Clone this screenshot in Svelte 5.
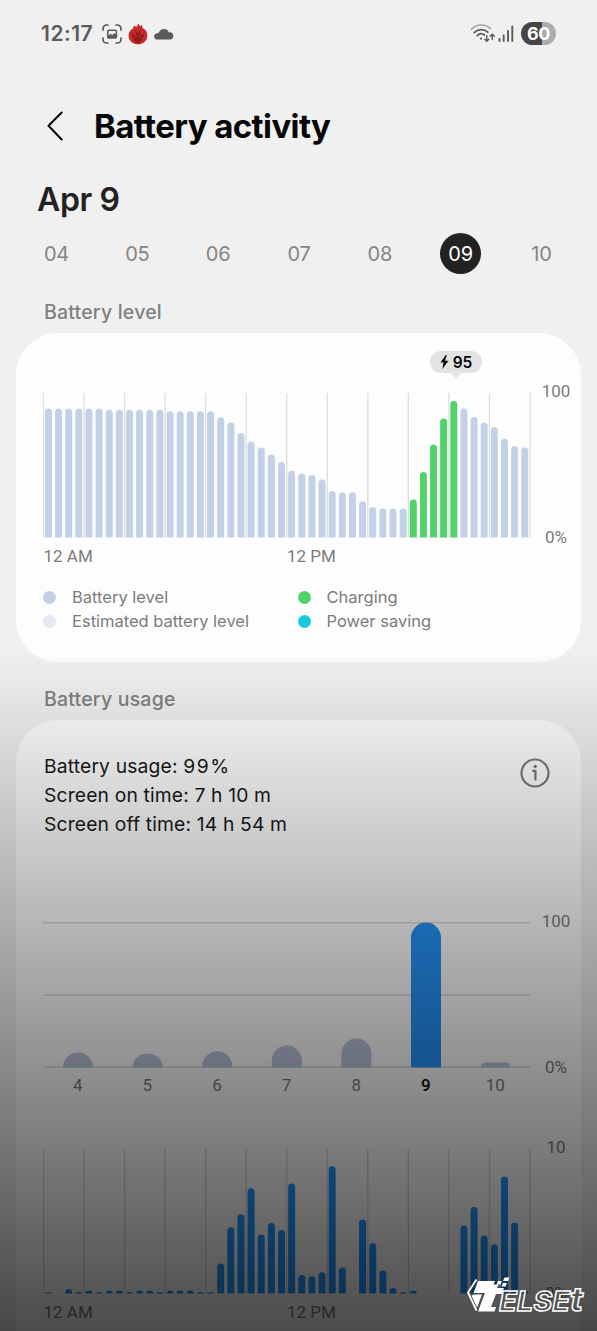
<script>
  const days = ['04', '05', '06', '07', '08', '09', '10'];
  const selected = '09';

  const STEP = 10.135;
  const BASE = 144.5;
  const gridLines = Array.from({ length: 13 }, (_, i) => 0.5 + i * STEP * 4);

  // Bar heights in pixels, one per half hour
  const level = [
    129, 129, 129, 129, 129, 129, 127.7, 127.7, 127.7, 127.7, 127.7, 127.7,
    126.3, 126.3, 126.3, 126.3, 126.3, 120.3, 115, 104.5, 96, 90, 83, 75.5,
    66.8, 64, 62.5, 58, 46.5, 45.2, 45.2, 36.3, 30.5, 29, 29, 29,
    38, 65.5, 93, 119, 136.5, 129, 120.5, 115, 110.5, 98.7, 91.5, 90
  ];
  const charging = (i) => i >= 36 && i <= 40;

  const usage = [
    1.5, 0, 4.5, 1.5, 3, 1.5, 3, 3, 1.5, 3, 3, 1.5,
    3, 3, 3, 1.5, 1.5, 30, 66.3, 79.3, 105.3, 59, 70.6, 63.6,
    110, 18.6, 17.3, 21.3, 127.3, 26, 0, 74, 50.6, 23, 5.6, 1.5,
    3, 0, 0, 0, 0, 68, 86.6, 58, 49.3, 117, 71, 3
  ];

  const week = [
    { day: '4', h: 15 }, { day: '5', h: 14 }, { day: '6', h: 16.3 },
    { day: '7', h: 22 }, { day: '8', h: 29 }, { day: '9', h: 145 },
    { day: '10', h: 5 }
  ];

  const legend = [
    ['Battery level', '#c3d0e5'], ['Charging', '#54d26a'],
    ['Estimated battery level', '#e5e9f2'], ['Power saving', '#17cbdf']
  ];

  // Column with a rounded top and a square foot
  function column(x, w, h, base, maxR) {
    const r = Math.min(maxR, h);
    return `M${x} ${base}V${base - h + r}a${maxR} ${r} 0 0 1 ${maxR} ${-r}h${w - 2 * maxR}a${maxR} ${r} 0 0 1 ${maxR} ${r}V${base}Z`;
  }
</script>

<main>
  <div class="status">
    <span class="time">12:17</span>
    <svg class="shot" width="20" height="20" viewBox="0 0 20 20" fill="none" stroke="#5a5a5a" stroke-width="1.7" stroke-linecap="round">
      <path d="M1 6V4.5A3.5 3.5 0 0 1 4.5 1H6M14 1h1.500A3.500 3.500 0 0 1 19 4.500V6M19 14v1.500A3.500 3.500 0 0 1 15.500 19H14M6 19H4.500A3.500 3.500 0 0 1 1 15.500V14" />
      <rect x="5.800" y="6.300" width="8.600" height="7.600" rx="1.200" stroke-width="1.600" />
      <path d="M6 12.500l2.500-2.300 1.700 1.300 2-2 2 2v2H6z" fill="#5a5a5a" stroke-width="1" />
    </svg>
    <svg class="flame" width="20" height="22" viewBox="0 0 20 22">
      <path d="M10.400 0.500L12 3.500 14 1.800 14.600 5C18 6.800 19.500 9.500 19.300 13 19 18 15 21.300 10 21.300S.8 18 .6 13C.5 9.300 2.500 6.500 5.200 5.300L6 2.500 8.300 4Z" fill="#c5292b" />
      <path d="M7 6.500L8.200 11 5.500 13.500 6.500 18 10 20 13.500 18 14.500 13.500 11.800 11 13 6.500 10.800 10H9.200Z" fill="#931a1a" />
      <path d="M3.500 10l3 3-1.500 1zM16.500 10l-3 3 1.500 1z" fill="#7c1414" />
      <circle cx="8" cy="13.500" r=".9" fill="#d83333" /><circle cx="12" cy="13.500" r=".9" fill="#d83333" />
    </svg>
    <svg class="cloud" width="20" height="12" viewBox="0 0 20 12">
      <path d="M3.500 11.500A3 3 0 0 1 3 5.400C3.600 5 4.200 4.800 4.900 4.800A5.300 5.300 0 0 1 14.900 4.500 3.500 3.500 0 0 1 16.500 11.500Z" fill="#5a5a5a" />
    </svg>
    <svg class="wifi" width="26" height="20" viewBox="0 0 26 20" fill="none" stroke="#5a5a5a" stroke-width="1.700" stroke-linecap="round">
      <path d="M1.500 5.200C7-.3 15.500-.3 20.500 4.700" stroke="#a3a3a3" />
      <path d="M4.200 8.600C8.200 4.700 14.200 4.700 17.800 8.200" />
      <path d="M7.200 11.600c2.300-2.200 5.200-2.300 7.300-.6" />
      <circle cx="11" cy="14.600" r="1.100" fill="#5a5a5a" stroke="none" />
      <path d="M16.800 11.800v5.200m-2-1.800 2 2 2-2M22.300 15.500v-5m-2 1.800 2-2 2 2" stroke-width="1.400" />
    </svg>
    <svg class="signal" width="16" height="18" viewBox="0 0 16 18" fill="none" stroke="#5a5a5a" stroke-width="1.900" stroke-linecap="round">
      <path d="M1.500 14v2M5.700 10.500V16M10 6v10M14.300 1.500V16" />
    </svg>
    <span class="charge">60</span>
  </div>

  <header>
    <svg width="18" height="30" viewBox="0 0 18 30" fill="none" stroke="#080808" stroke-width="2" stroke-linecap="round" stroke-linejoin="round">
      <path d="M15.700 1.500 2.500 14.800 15.700 28.500" />
    </svg>
    <h1>Battery activity</h1>
  </header>

  <h2>Apr 9</h2>
  <nav>
    {#each days as day}
      <span class:on={day === selected}>{day}</span>
    {/each}
  </nav>

  <h3>Battery level</h3>
  <section class="card level">
    <div class="tip">
      <svg width="9" height="14" viewBox="0 0 9 14"><path d="M5.800 0 .5 7.600h3L2.400 14 8.500 5.700H5L6.800 0Z" fill="#080808" /></svg>
      95
    </div>
    <div class="plot">
      <svg width="488" height="145" viewBox="0 0 488 145">
        {#each gridLines as x}<path d="M{x} 0V144.500" stroke="#dedede" stroke-width="1.300" />{/each}
        {#each level as h, i}
          <path d={column(1.9 + i * STEP, 7, h, BASE, 3.5)} fill={charging(i) ? '#54d26a' : '#c3d1e6'} />
        {/each}
      </svg>
      <div class="axis"><span>100</span><span>0%</span></div>
    </div>
    <div class="hours"><span>12 AM</span><span>12 PM</span></div>
    <div class="legend">
      {#each legend as [name, color]}
        <span><i style:background={color}></i>{name}</span>
      {/each}
    </div>
  </section>

  <h3 class="second">Battery usage</h3>
  <section class="card usage">
    <div class="summary">
      <p>Battery usage: <span class="pct">99%</span><br />Screen on time: 7 h 10 m<br />Screen off time: 14 h 54 m</p>
      <svg width="30" height="30" viewBox="0 0 30 30" fill="none" stroke="#7b7b7b" stroke-width="2.200">
        <circle cx="15" cy="15" r="13.500" />
        <path d="M12.200 12.800h3.200v9.700" />
        <circle cx="15.200" cy="8.500" r="1.700" fill="#7b7b7b" stroke="none" />
      </svg>
    </div>
    <div class="plot weekly">
      <svg width="488" height="146" viewBox="0 0 488 146">
        {#each [0.8, 73, 145] as y}<path d="M0 {y}H487" stroke="#dadada" stroke-width="1.500" />{/each}
        {#each week as d, i}
          <path d={column(20 + i * 69.6, 30, d.h, 145.5, d.h < 10 ? 5 : 15)} fill={d.day === '9' ? '#2593f8' : '#bac4dc'} />
        {/each}
      </svg>
      <div class="axis"><span>100</span><span>0%</span></div>
    </div>
    <div class="weekdays">
      {#each week as d}<span class:on={d.day === '9'}>{d.day}</span>{/each}
    </div>
    <div class="plot hourly">
      <svg width="488" height="145" viewBox="0 0 488 145">
        {#each gridLines as x}<path d="M{x} 0V144.500" stroke="#d6d6d6" stroke-width="1.300" />{/each}
        {#each usage as h, i}
          {#if h}<path d={column(1.9 + i * STEP, 7, h, BASE, 3.5)} fill="#2096ff" />{/if}
        {/each}
      </svg>
      <div class="axis"><span>10</span><span>0%</span></div>
    </div>
    <div class="hours"><span>12 AM</span><span>12 PM</span></div>
  </section>

  <div class="shade"></div>
  <svg class="logo" width="126" height="48" viewBox="0 -4 126 48">
    <path d="M11.500 3.500 3 16.500 11.500 34.500" fill="none" stroke="#fff" stroke-width="1.800" />
    <path d="M13 5H30L28.500 8.500H33.500L32 12H39L36.500 18H31L26 31H31L29.500 35.500H13L20 17H8.500Z" fill="#fff" />
    <path d="M9 18.500H17L12 31.500 6.500 19.500Z" fill="#fff" />
    <path d="M33 5h4l-1.500 3.500h-4zM39.500 1.500h5L43 5h-5zM38 7h4L40.500 10.500h-4z" fill="#fff" />
    <text x="34" y="34.500" textLength="84" lengthAdjust="spacingAndGlyphs">ELSE<tspan font-size="33">t</tspan></text>
  </svg>
</main>

<style>
  :global(body) { background: #f0f0f0; }
  main {
    position: relative;
    box-sizing: border-box;
    width: 597px;
    height: 1331px;
    overflow: hidden;
    background: #f0f0f0;
    font-family: Inter, Roboto, sans-serif;
    color: #7c7c7c;
  }
  h1, h2, h3, p { margin: 0; }
  svg { display: block; flex: none; }

  .status { display: flex; align-items: center; height: 67px; padding: 0 41px 0 41px; }
  .time { width: 61px; font-size: 21px; font-weight: 600; color: #5a5a5a; letter-spacing: 0.5px; }
  .flame { margin-left: 6px; }
  .cloud { margin-left: 6px; }
  .wifi { margin-left: auto; }
  .signal { margin: 0 7px 0 2px; }
  .charge {
    width: 35px;
    height: 23px;
    border-radius: 12px;
    background: linear-gradient(90deg, #454545 59%, #acacac 59%);
    color: #fff;
    font-size: 18px;
    font-weight: 700;
    line-height: 23px;
    letter-spacing: -0.3px;
    text-align: center;
  }

  header { display: flex; align-items: center; height: 60px; margin-top: 29px; padding-left: 46px; gap: 30px; }
  h1 { font-size: 33px; font-weight: 650; letter-spacing: -0.6px; color: #080808; line-height: 40px; }
  h2 { margin: 24px 0 0 37px; font-size: 32px; line-height: 40px; font-weight: 600; letter-spacing: -0.4px; color: #222; }

  nav { display: flex; justify-content: space-between; margin: 13px 35px 0 36px; height: 41px; }
  nav span { width: 41px; border-radius: 50%; font-size: 20px; line-height: 42px; letter-spacing: -0.2px; text-align: center; color: #858585; }
  nav .on { background: #222; color: #fff; }

  h3 { margin: 26px 0 0 44px; height: 24px; font-size: 19.500px; line-height: 24px; font-weight: 500; letter-spacing: 0.2px; color: #808080; }
  h3.second { margin-top: 25px; }
  .card { box-sizing: border-box; margin: 9px 16px 0; padding: 0 0 0 27px; background: #fdfdfd; border-radius: 42px; }
  .level { height: 329px; padding-top: 18px; }

  .tip {
    position: relative;
    display: flex;
    align-items: center;
    justify-content: center;
    gap: 4px;
    width: 52px;
    height: 22px;
    margin-left: 387px;
    border-radius: 11px;
    background: #e3e3e3;
    color: #080808;
    font-size: 15.500px;
    font-weight: 600;
  }
  .tip::after { content: ''; position: absolute; left: 21px; top: 22px; border: 5px solid transparent; border-top-color: #e3e3e3; border-bottom: 0; }

  .plot { display: flex; margin-top: 20px; }
  .axis {
    display: flex;
    flex-direction: column;
    justify-content: space-between;
    align-items: center;
    width: 30px;
    margin: -12px 0 -9px 10px;
    font: 17px/20px Roboto, sans-serif;
  }
  .hours { display: flex; margin: 8px 0 0 0.500px; font: 17px/20px Roboto, sans-serif; }
  .hours span { width: 243.500px; }
  .legend { display: grid; grid-template-columns: 254.500px 1fr; margin-top: 19px; font-size: 16.500px; line-height: 24px; }
  .legend span { display: flex; align-items: center; }
  .legend i { width: 13px; height: 13px; margin-right: 16px; border-radius: 50%; }

  .usage { height: 700px; padding-top: 32px; }
  .summary { display: flex; justify-content: space-between; padding: 0 31px 0 1px; color: #181818; }
  .summary p { font-size: 19.300px; line-height: 28.800px; letter-spacing: 0.150px; }
  .pct { letter-spacing: 1.600px; }
  .summary svg { margin-top: 6px; }
  .weekly { margin-top: 84px; }
  .weekly .axis { margin-top: -11px; }
  .weekdays { display: flex; margin-top: 7px; font: 17px/20px Roboto, sans-serif; }
  .weekdays span { width: 69.600px; text-align: center; }
  .weekdays .on { color: #080808; font-weight: 500; }
  .hourly { margin-top: 54px; }

  .shade { position: absolute; inset: 650px 0 0; background: linear-gradient(rgba(0, 0, 0, 0), rgba(0, 0, 0, 0.7)); }
  .logo { position: absolute; left: 465px; top: 1272px; }
  .logo text { font: italic 700 27px Inter, sans-serif; fill: none; stroke: #fff; stroke-width: 1.400px; }
</style>
